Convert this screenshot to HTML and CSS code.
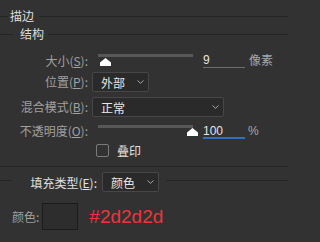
FILE: index.html
```html
<!DOCTYPE html>
<html lang="zh">
<head>
<meta charset="utf-8">
<link rel="stylesheet" href="styles.css">
</head>
<body>
<div class="panel">
  <div class="legend l1"><span>描边</span></div>
  <div class="legend l2"><span>结构</span></div>

  <div class="row r-size">
    <span class="lbl">大小(<u>S</u>):</span>
    <div class="slider"><div class="track"></div><svg class="thumb t-size" width="11" height="8" viewBox="0 0 11 8"><path d="M0 8 L0 4.6 L5.5 0 L11 4.6 L11 8 Z" fill="#fff"/></svg></div>
    <div class="num">9</div>
    <span class="unit">像素</span>
  </div>

  <div class="row r-pos">
    <span class="lbl">位置(<u>P</u>):</span>
    <div class="select s-pos"><span>外部</span><svg class="chev" width="7" height="4" viewBox="0 0 7 4"><path d="M0.5 0.5 L3.5 3.3 L6.5 0.5" stroke="#a8a8a8" fill="none" stroke-width="1"/></svg></div>
  </div>

  <div class="row r-blend">
    <span class="lbl">混合模式(<u>B</u>):</span>
    <div class="select s-blend"><span>正常</span><svg class="chev" width="7" height="4" viewBox="0 0 7 4"><path d="M0.5 0.5 L3.5 3.3 L6.5 0.5" stroke="#a8a8a8" fill="none" stroke-width="1"/></svg></div>
  </div>

  <div class="row r-op">
    <span class="lbl">不透明度(<u>O</u>):</span>
    <div class="slider"><div class="track"></div><svg class="thumb t-op" width="11" height="8" viewBox="0 0 11 8"><path d="M0 8 L0 4.6 L5.5 0 L11 4.6 L11 8 Z" fill="#fff"/></svg></div>
    <div class="num active">100</div>
    <span class="unit pct">%</span>
  </div>

  <div class="row r-check">
    <span class="box"></span>
    <span class="check-lbl">叠印</span>
  </div>

  <div class="sep"></div>

  <div class="row r-fill">
    <span class="fill-lbl">填充类型(<u>E</u>):</span>
    <div class="select s-fill"><span>颜色</span><svg class="chev" width="7" height="4" viewBox="0 0 7 4"><path d="M0.5 0.5 L3.5 3.3 L6.5 0.5" stroke="#a8a8a8" fill="none" stroke-width="1"/></svg></div>
  </div>

  <div class="row r-color">
    <span class="color-lbl">颜色:</span>
    <span class="swatch"></span>
    <span class="hex">#2d2d2d</span>
  </div>
</div>
</body>
</html>
```
FILE: styles.css
```css
html, body {
  margin: 0;
  padding: 0;
  background: #323232;
}
body {
  width: 288px;
  height: 242px;
  overflow: hidden;
  font-family: "Noto Sans CJK SC", "Liberation Sans", sans-serif;
  font-size: 12px;
  color: #a0a0a0;
}
.panel {
  display: flex;
  flex-direction: column;
}
u {
  text-decoration: underline;
  text-underline-offset: 1px;
}
.legend {
  display: flex;
  align-items: center;
  height: 16px;
  line-height: 16px;
  color: #dedede;
}
.legend::before,
.legend::after {
  content: "";
  height: 1px;
  background: #252525;
}
.legend::after { flex: 1; }
.l1 { margin-top: 8px; }
.l1::before { width: 8px; margin-right: 2px; }
.l1::after { margin-left: 5px; }
.l2 { margin-top: 2px; }
.l2::before { width: 13px; margin-right: 7px; }
.l2::after { margin-left: 4px; }

.row {
  display: flex;
  align-items: center;
  height: 20px;
}
.lbl {
  width: 88px;
  text-align: right;
  flex: none;
  line-height: 20px;
}
.r-size { margin-top: 9px; }
.r-pos { margin-top: 1px; }
.r-blend { margin-top: 5px; }
.r-op { margin-top: 4px; }

.slider {
  position: relative;
  width: 95px;
  height: 20px;
  margin-left: 10px;
  align-self: flex-start;
}
.track {
  margin-top: 3px;
  height: 3px;
  background: #585858;
}
.r-op .track { margin-top: 4px; }
.thumb {
  position: absolute;
  top: 7px;
  display: block;
}
.t-size { left: 2px; }
.t-op { left: 89px; top: 7px; }

.num {
  align-self: flex-start;
  box-sizing: border-box;
  width: 42px;
  height: 17px;
  margin-left: 10px;
  padding-top: 3px;
  line-height: 13px;
  color: #e4e4e4;
  font-family: "Liberation Sans", sans-serif;
  font-size: 12px;
  border-bottom: 1px solid #6c6c6c;
}
.num.active {
  height: 18px;
  padding-top: 4px;
  border-bottom: 2px solid #2f6fc4;
  line-height: 12px;
}
.unit {
  margin-left: 4px;
  color: #a8a8a8;
  line-height: 20px;
  margin-top: -2px;
}
.unit.pct {
  margin-left: 3px;
  font-family: "Liberation Sans", sans-serif;
  margin-top: 0;
}

.select {
  box-sizing: border-box;
  height: 20px;
  margin-left: 4px;
  display: flex;
  align-items: center;
  justify-content: space-between;
  padding: 0 4px 0 8px;
  background: #2a2a2a;
  border: 1px solid #474747;
  border-radius: 2px;
  color: #e8e8e8;
}
.chev { display: block; }
.s-pos { width: 57px; }
.s-blend { width: 132px; }

.r-check {
  margin-top: 1px;
  height: 16px;
  padding-left: 96px;
}
.box {
  box-sizing: border-box;
  width: 13px;
  height: 13px;
  border: 1px solid #7a7a7a;
  border-radius: 2px;
}
.check-lbl {
  margin-left: 8px;
  color: #e0e0e0;
}

.sep {
  margin-top: 8px;
  height: 1px;
  background: #262626;
}

.r-fill {
  margin-top: 5px;
}
.r-fill::before,
.r-fill::after {
  content: "";
  height: 1px;
  background: #252525;
  align-self: flex-start;
  margin-top: 8px;
}
.r-fill::before { width: 12px; }
.r-fill::after { flex: 1; margin-left: 7px; }
.fill-lbl {
  width: 85px;
  text-align: right;
  color: #e0e0e0;
}
.s-fill { width: 57px; margin-left: 5px; }

.r-color {
  margin-top: 11px;
  height: 27px;
  padding-left: 12px;
}
.color-lbl { color: #a0a0a0; }
.swatch {
  box-sizing: border-box;
  width: 36px;
  height: 27px;
  margin-left: 3px;
  background: #2d2d2d;
  border: 1px solid #1c1c1c;
}
.hex {
  margin-left: 11px;
  color: #f2333a;
  font-family: "Liberation Sans", sans-serif;
  font-size: 19px;
}
```
